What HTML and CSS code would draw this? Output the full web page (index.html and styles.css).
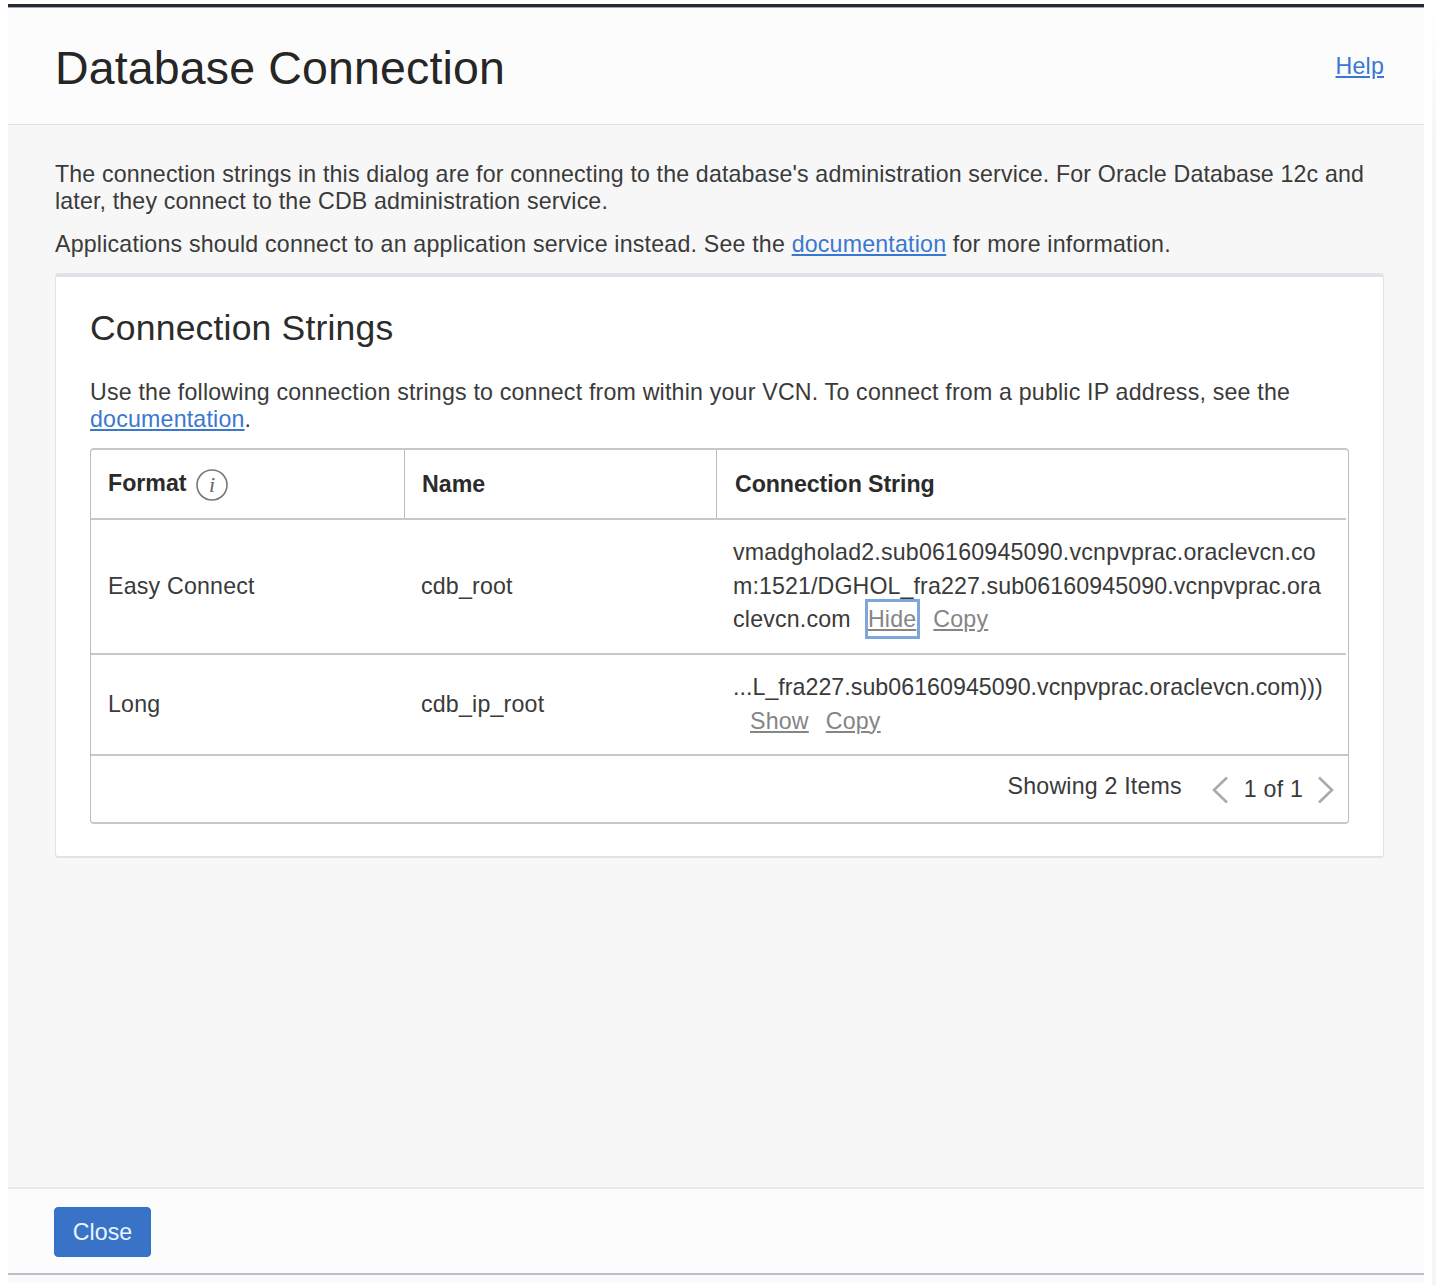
FILE: index.html
```html
<!DOCTYPE html>
<html lang="en">
<head>
<meta charset="utf-8">
<title>Database Connection</title>
<link rel="stylesheet" href="styles.css">
</head>
<body>
<div class="page">
  <section class="dialog">
    <header class="dialog-header">
      <h1>Database Connection</h1>
      <a class="link help" href="#">Help</a>
    </header>
    <main class="dialog-body">
      <p class="intro tight">The connection strings in this dialog are for connecting to the database's administration service. For Oracle Database 12c and<br>later, they connect to the CDB administration service.</p>
      <p class="intro">Applications should connect to an application service instead. See the <a class="link" href="#">documentation</a> for more information.</p>
      <section class="card">
        <h2>Connection Strings</h2>
        <p class="note">Use the following connection strings to connect from within your VCN. To connect from a public IP address, see the<br><a class="link" href="#">documentation</a>.</p>
        <div class="table">
          <div class="row head">
            <div class="cell format"><span>Format</span>
              <svg class="info" width="34" height="34" viewBox="0 0 34 34"><circle cx="17" cy="17" r="15" fill="none" stroke="#777" stroke-width="1.6"/><text x="17" y="23.5" text-anchor="middle">i</text></svg>
            </div>
            <div class="cell">Name</div>
            <div class="cell">Connection String</div>
          </div>
          <div class="row easy">
            <div class="cell">Easy Connect</div>
            <div class="cell">cdb_root</div>
            <div class="cell string">vmadgholad2.sub06160945090.vcnpvprac.oraclevcn.co<br><span class="tight">m:1521/DGHOL_fra227.sub06160945090.vcnpvprac.ora</span><br>clevcn.com<a class="action focused" href="#">Hide</a><a class="action" href="#">Copy</a></div>
          </div>
          <div class="row long">
            <div class="cell">Long</div>
            <div class="cell">cdb_ip_root</div>
            <div class="cell string"><span class="tighter">...L_fra227.sub06160945090.vcnpvprac.oraclevcn.com)))</span><br><a class="action" href="#">Show</a><a class="action" href="#">Copy</a></div>
          </div>
          <div class="pager">
            <span class="count">Showing 2 Items</span>
            <svg width="16" height="28" viewBox="0 0 16 28"><path d="M15 1.5L2 14L15 26.5"/></svg>
            <span class="pages">1 of 1</span>
            <svg width="16" height="28" viewBox="0 0 16 28"><path d="M1 1.5L14 14L1 26.5"/></svg>
          </div>
        </div>
      </section>
    </main>
    <footer class="dialog-footer"><button class="close">Close</button></footer>
    <div class="under"></div>
  </section>
  <div class="edge"></div>
</div>
</body>
</html>
```
FILE: styles.css
```css
* { box-sizing: border-box; }
body {
  margin: 0;
  background: #fff;
  color: #3a3a3a;
  font: 23.2px/27px "Liberation Sans", Arial, sans-serif;
  letter-spacing: 0.19px;
}
h1, h2, p { margin: 0; font-weight: 400; }
.tight { letter-spacing: 0.145px; }
.tight .tight, .string .tight { letter-spacing: 0.11px; }
.tighter { letter-spacing: 0.04px; }
.page {
  display: flex;
  justify-content: space-between;
  height: 1286px;
  padding: 4px 0 0 8px;
  overflow: hidden;
}
.dialog {
  display: flex;
  flex-direction: column;
  width: 1416px;
  height: 1278px;
  border-top: 3px solid #232b37;
}
.edge {
  width: 4px;
  background: linear-gradient(#fff, #f5f5f5 150px);
  border-bottom-left-radius: 4px;
}
.dialog-header {
  display: flex;
  justify-content: space-between;
  height: 118px;
  padding: 34px 40px 0 47px;
  background: #fcfcfc;
  border-top: 1px solid #a5a9af;
  border-bottom: 1px solid #e1e2e3;
}
h1 {
  color: #262626;
  font-size: 46.5px;
  line-height: 52px;
  letter-spacing: 0.15px;
}
.help { margin-top: 11px; }
.link {
  color: #3a78cf;
  text-underline-offset: 2px;
  text-decoration-thickness: 1.5px;
}
.dialog-body {
  flex: 1;
  padding: 36px 40px 0 47px;
  background: #f7f7f7;
}
.intro { margin-bottom: 16px; }
.intro + .card { margin-top: -1px; }
.card {
  height: 585px;
  padding: 31px 34px 0;
  background: #fff;
  border: 1px solid #e0e2e5;
  border-bottom-width: 2px;
  border-top: 4px solid #e1e2e7;
  border-radius: 4px;
}
h2 {
  color: #2c2c2c;
  font-size: 35.5px;
  line-height: 40px;
}
.note { margin: 31px 0 15px; }
.table {
  width: 1259px;
  height: 376px;
  border: 1px solid #b7bec6;
  border-top: 2px solid #c3c8cf;
  border-bottom: 2px solid #c3c8cf;
  border-radius: 4px;
}
.row {
  display: grid;
  grid-template-columns: 314px 312px 1fr;
  align-items: center;
  margin-right: 2px;
  border-bottom: 2px solid #c3c8cf;
}
.cell { padding-left: 17px; }
.cell + .cell { padding-left: 16px; }
.head { height: 70px; font-weight: 700; color: #2b2b2b; letter-spacing: 0; }
.head .cell { display: flex; align-items: center; height: 100%; padding-top: 1px; border-right: 1px solid #b7bec6; }
.head .cell + .cell { padding-left: 17px; }
.head .cell:last-child { padding-left: 18px; border-right: 0; letter-spacing: -0.08px; }
.format span { margin-top: -2px; }
.info { margin-left: 8px; }
.info text { font: italic 22px "Liberation Serif", serif; fill: #666; }
.easy { height: 135px; }
.long { height: 101px; margin-right: 0; }
.string { line-height: 33.4px; white-space: nowrap; }
.action {
  margin-left: 17px;
  color: #858585;
  text-underline-offset: 2px;
  text-decoration-thickness: 1.5px;
}
.focused { padding: 4px 1px 4px 0; margin-right: -1px; outline: 3px solid #7ea6dd; outline-offset: 0; }
.pager {
  display: flex;
  align-items: center;
  justify-content: flex-end;
  height: 66px;
  padding: 1px 14px 0 0;
}
.pager svg { fill: none; stroke: #aaa; stroke-width: 2.6; }
.count { margin: -6px 30px 0 0; }
.pages { margin: 0 15px 0 16px; }
.dialog-footer {
  height: 88px;
  padding: 18px 0 0 46px;
  background: #fcfcfc;
  border-top: 2px solid #e9e9e9;
  border-bottom: 2px solid #b8bfc8;
}
.close {
  width: 97px;
  height: 50px;
  padding: 1px 0 0;
  color: #e9f4ff;
  background: #3873c8;
  border: 1px solid #3370ca;
  border-radius: 4px;
  font: inherit;
  letter-spacing: 0;
}
.under { height: 7px; background: #fafafa; }
```
